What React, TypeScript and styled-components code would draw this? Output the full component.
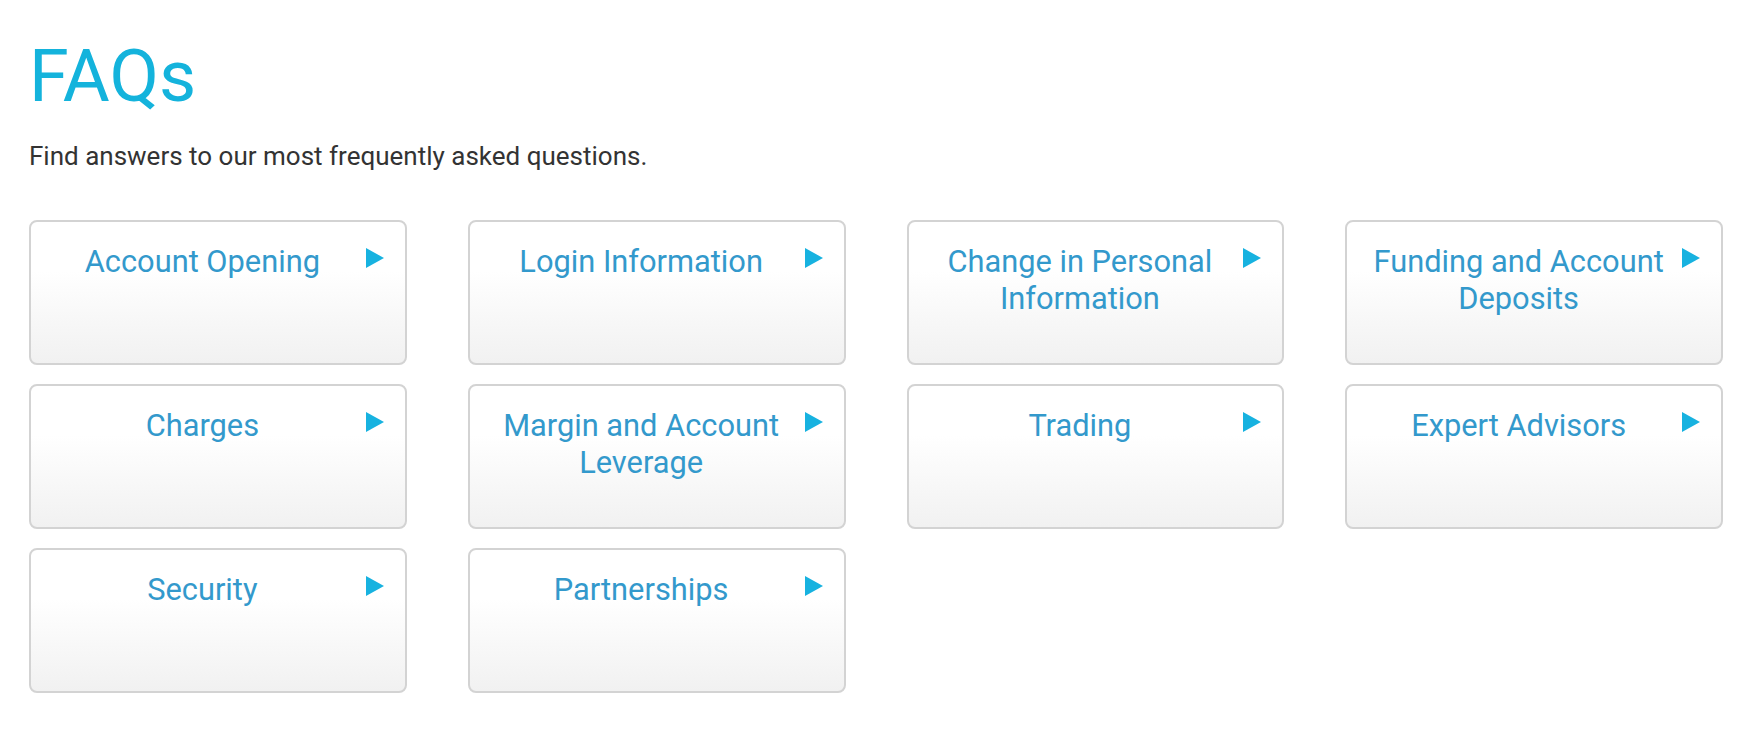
import styled, { createGlobalStyle } from "styled-components";

const GlobalStyle = createGlobalStyle`
  html, body {
    margin: 0;
    padding: 0;
    background: #ffffff;
    font-family: Roboto, "Liberation Sans", Arial, sans-serif;
  }
`;

const Page = styled.main`
  padding: 35px 35px 40px 29px;
`;

const Title = styled.h1`
  margin: 0;
  font-size: 72px;
  line-height: 84px;
  font-weight: 400;
  color: #14b3dc;
`;

const Subtitle = styled.p`
  margin: 19px 0 0;
  font-size: 26px;
  line-height: 36px;
  color: #333333;
`;

const Grid = styled.div`
  display: grid;
  grid-template-columns: repeat(4, 1fr);
  column-gap: 61px;
  row-gap: 19px;
  margin-top: 46px;
`;

const Card = styled.a`
  display: flex;
  align-items: flex-start;
  gap: 12px;
  height: 145px;
  box-sizing: border-box;
  padding: 21px 20px 0 20px;
  border: 2px solid #d3d3d3;
  border-radius: 8px;
  background: linear-gradient(to bottom, #ffffff 35%, #f1f1f1 100%);
  text-decoration: none;
  cursor: pointer;
`;

const CardTitle = styled.span`
  flex: 1;
  text-align: center;
  font-size: 30.8px;
  line-height: 37px;
  color: #3399cc;
`;

const Arrow = styled.svg`
  flex: none;
  margin-top: 5px;
  margin-right: 1px;
`;

const topics = [
  "Account Opening",
  "Login Information",
  "Change in Personal Information",
  "Funding and Account Deposits",
  "Charges",
  "Margin and Account Leverage",
  "Trading",
  "Expert Advisors",
  "Security",
  "Partnerships",
];

const App = () => {
  return (
    <>
      <GlobalStyle />
      <Page>
        <Title>FAQs</Title>
        <Subtitle>Find answers to our most frequently asked questions.</Subtitle>
        <Grid>
          {topics.map((topic) => (
            <Card key={topic} href="#">
              <CardTitle>{topic}</CardTitle>
              <Arrow width="18" height="20" viewBox="0 0 18 20">
                <polygon points="0,0 18,10 0,20" fill="#17b2e0" />
              </Arrow>
            </Card>
          ))}
        </Grid>
      </Page>
    </>
  );
};

export default App;
